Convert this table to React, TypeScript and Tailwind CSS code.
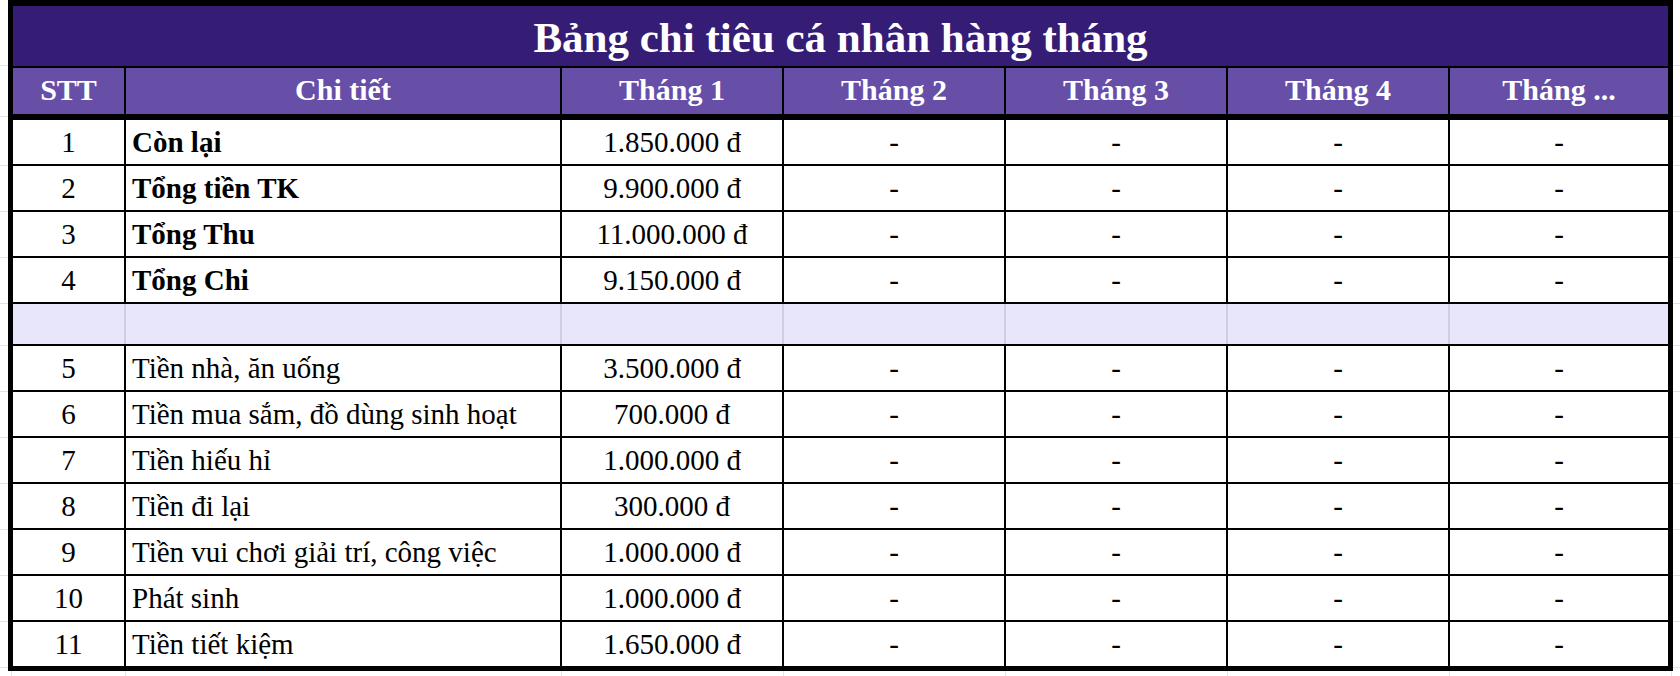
const rows = [
  { stt: '1', name: 'Còn lại', value: '1.850.000 đ', bold: true },
  { stt: '2', name: 'Tổng tiền TK', value: '9.900.000 đ', bold: true },
  { stt: '3', name: 'Tổng Thu', value: '11.000.000 đ', bold: true },
  { stt: '4', name: 'Tổng Chi', value: '9.150.000 đ', bold: true },
  null,
  { stt: '5', name: 'Tiền nhà, ăn uống', value: '3.500.000 đ' },
  { stt: '6', name: 'Tiền mua sắm, đồ dùng sinh hoạt', value: '700.000 đ' },
  { stt: '7', name: 'Tiền hiếu hỉ', value: '1.000.000 đ' },
  { stt: '8', name: 'Tiền đi lại', value: '300.000 đ' },
  { stt: '9', name: 'Tiền vui chơi giải trí, công việc', value: '1.000.000 đ' },
  { stt: '10', name: 'Phát sinh', value: '1.000.000 đ' },
  { stt: '11', name: 'Tiền tiết kiệm', value: '1.650.000 đ' },
];

const months = ['Tháng 2', 'Tháng 3', 'Tháng 4'];

// gutter strips that show the sheet gridlines around the bordered table
const gutterHeights = [66, 51, 49, 46, 46, 46, 42, 46, 46, 46, 46, 46, 46, 46];

function Gutter() {
  return (
    <div className="flex flex-col flex-1">
      {gutterHeights.map((h, i) => (
        <div
          key={i}
          className="shrink-0 border-b border-[#e3e3e3]"
          style={{ height: h }}
        />
      ))}
    </div>
  );
}

function HeaderCell({ children, className = '' }: { children: React.ReactNode; className?: string }) {
  return (
    <div className={`flex items-center justify-center pb-[3px] text-white font-bold text-[30px] ${className}`}>
      {children}
    </div>
  );
}

export default function App() {
  return (
    <div
      className="w-[1680px] h-[676px] bg-white overflow-hidden flex flex-col"
      style={{ fontFamily: '"Liberation Serif", "Times New Roman", serif' }}
    >
      <div className="flex h-[671px] shrink-0">
        <div className="w-[8px] flex">
          <Gutter />
        </div>

        <div className="w-[1665px] shrink-0 border-t-[6px] border-l-[5px] border-r-[5px] border-b-[5px] border-black flex flex-col">
          <div className="h-[62px] shrink-0 border-b-2 border-black bg-[#351c75] flex items-center justify-center pt-[2px]">
            <span className="text-white font-bold text-[43px] leading-none">
              Bảng chi tiêu cá nhân hàng tháng
            </span>
          </div>

          <div className="h-[52px] shrink-0 border-b-[6px] border-black bg-[#674ea7] flex">
            <HeaderCell className="w-[113px] border-r-2 border-black">STT</HeaderCell>
            <HeaderCell className="w-[436px] border-r-2 border-black">Chi tiết</HeaderCell>
            <HeaderCell className="w-[222px] border-r-2 border-black">Tháng 1</HeaderCell>
            {months.map((m) => (
              <HeaderCell key={m} className="w-[222px] border-r-2 border-black">
                {m}
              </HeaderCell>
            ))}
            <HeaderCell className="flex-1">Tháng ...</HeaderCell>
          </div>

          {rows.map((r, i) => {
            if (!r) {
              return (
                <div key={i} className="h-[42px] shrink-0 border-b-2 border-black bg-[#e7e6fb] flex">
                  <div className="w-[113px] border-r-2 border-[#cfcfdf]" />
                  <div className="w-[436px] border-r-2 border-[#cfcfdf]" />
                  <div className="w-[222px] border-r-2 border-[#cfcfdf]" />
                  <div className="w-[222px] border-r-2 border-[#cfcfdf]" />
                  <div className="w-[222px] border-r-2 border-[#cfcfdf]" />
                  <div className="w-[222px] border-r-2 border-[#cfcfdf]" />
                  <div className="flex-1" />
                </div>
              );
            }
            const last = i === rows.length - 1;
            return (
              <div
                key={i}
                className={`shrink-0 flex text-black text-[29px] ${last ? 'h-[44px]' : 'h-[46px] border-b-2 border-black'}`}
              >
                <div className="w-[113px] border-r-2 border-black flex items-center justify-center pt-[2px]">
                  {r.stt}
                </div>
                <div className={`w-[436px] border-r-2 border-black flex items-center pl-[6px] pt-[2px] whitespace-nowrap ${r.bold ? 'font-bold' : ''}`}>
                  {r.name}
                </div>
                <div className="w-[222px] border-r-2 border-black flex items-center justify-center pt-[2px]">
                  {r.value}
                </div>
                {months.map((m) => (
                  <div key={m} className="w-[222px] border-r-2 border-black flex items-center justify-center pt-[2px]">
                    -
                  </div>
                ))}
                <div className="flex-1 flex items-center justify-center pt-[2px]">-</div>
              </div>
            );
          })}
        </div>

        <div className="flex-1 flex">
          <Gutter />
        </div>
      </div>

      <div className="flex flex-1">
        <div className="w-[12px] shrink-0 border-r border-[#e3e3e3]" />
        <div className="w-[114px] shrink-0 border-r border-[#e3e3e3]" />
        <div className="w-[436px] shrink-0 border-r border-[#e3e3e3]" />
        <div className="w-[222px] shrink-0 border-r border-[#e3e3e3]" />
        <div className="w-[222px] shrink-0 border-r border-[#e3e3e3]" />
        <div className="w-[222px] shrink-0 border-r border-[#e3e3e3]" />
        <div className="w-[222px] shrink-0 border-r border-[#e3e3e3]" />
        <div className="w-[222px] shrink-0 border-r border-[#e3e3e3]" />
        <div className="flex-1" />
      </div>
    </div>
  );
}
